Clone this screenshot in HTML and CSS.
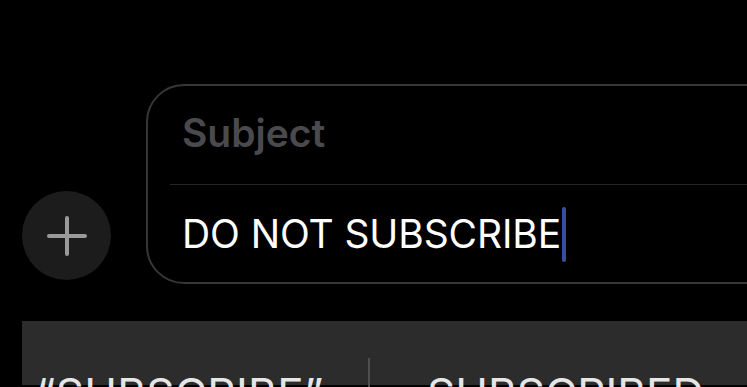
FILE: index.html
```html
<!DOCTYPE html>
<html lang="en">
<head>
    <meta charset="UTF-8">
    <meta name="viewport" content="width=device-width, initial-scale=1.0">
    <title>Compose</title>
    <link rel="stylesheet" href="styles.css">
</head>
<body>
    <div class="screen">
        <div class="compose">
            <button class="add-btn" aria-label="Add">
                <svg width="40" height="40" viewBox="0 0 40 40">
                    <path d="M20 2 V38 M2 20 H38" stroke="#9a9a9a" stroke-width="4" stroke-linecap="round" fill="none"/>
                </svg>
            </button>
            <div class="field-box">
                <div class="subject">Subject</div>
                <div class="divider"></div>
                <div class="body-text">DO NOT SUBSCRIBE<span class="caret"></span></div>
            </div>
        </div>

        <div class="suggestions">
            <div class="suggestion first">&ldquo;SUBSCRIBE&rdquo;</div>
            <div class="sep"></div>
            <div class="suggestion">SUBSCRIBED</div>
        </div>
    </div>
</body>
</html>
```

FILE: styles.css
```css
html, body {
    margin: 0;
    padding: 0;
    background: #000;
}
.screen {
    width: 747px;
    height: 387px;
    overflow: hidden;
    font-family: "Inter", "Liberation Sans", sans-serif;
}
.compose {
    display: flex;
    align-items: flex-end;
    padding-top: 84px;
    width: 900px;
}
.add-btn {
    width: 89px;
    height: 89px;
    border-radius: 50%;
    border: none;
    background: #1c1c1c;
    margin: 0 0 4px 22px;
    padding: 0;
    display: flex;
    align-items: center;
    justify-content: center;
    flex-shrink: 0;
}
.field-box {
    flex: 1;
    margin-left: 35px;
    height: 196px;
    border: 2px solid #363636;
    border-radius: 38px;
}
.subject {
    padding: 28px 0 0 34px;
    font-size: 39px;
    line-height: 38px;
    font-weight: 600;
    color: #4a4a4e;
    box-sizing: border-box;
    height: 98px;
}
.divider {
    height: 1px;
    margin-left: 22px;
    background: #262626;
}
.body-text {
    padding: 22px 0 0 34px;
    font-size: 39px;
    line-height: 38px;
    color: #fff;
    letter-spacing: -0.1px;
}
.caret {
    display: inline-block;
    width: 4px;
    height: 55px;
    margin-left: 1px;
    vertical-align: -14px;
    background: #3a4ea0;
    border-radius: 2px;
}
.suggestions {
    display: flex;
    align-items: flex-start;
    margin: 37px 0 0 22px;
    height: 64px;
    background: #2c2c2c;
    color: #e6e6e6;
    font-size: 44px;
    line-height: 44px;
}
.suggestion {
    padding-top: 51px;
    padding-left: 57px;
    white-space: nowrap;
}
.suggestion.first {
    width: 332px;
    padding-left: 14px;
    letter-spacing: 0.3px;
}
.sep {
    width: 2px;
    height: 40px;
    margin-top: 37px;
    background: #4e4e4e;
}
```
